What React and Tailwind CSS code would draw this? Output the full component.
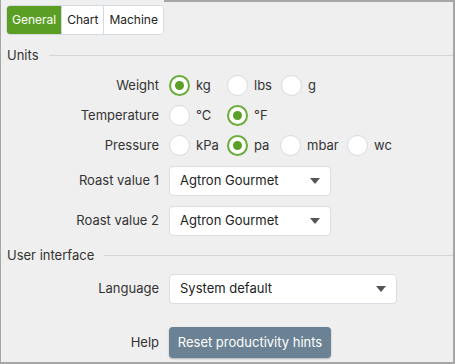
import { useState } from 'react';

const font = { fontFamily: 'Inter, "Noto Sans", sans-serif' };

function Radio({ checked, label, width, onClick }) {
  return (
    <button type="button" onClick={onClick} className="flex items-center gap-[6px] text-left" style={{ width }}>
      <span
        className={
          checked
            ? 'flex h-[21px] w-[21px] shrink-0 items-center justify-center rounded-full border-2 border-[#6aac3a] bg-white'
            : 'h-[21px] w-[21px] shrink-0 rounded-full border border-[#d3dbe0] bg-white'
        }
      >
        {checked && <span className="h-[9px] w-[9px] rounded-full bg-[#5a9f26]" />}
      </span>
      <span className="text-[13px] text-[#333]">{label}</span>
    </button>
  );
}

function Select({ value, width }) {
  return (
    <div
      className="flex h-[30px] items-center justify-between rounded-[4px] border border-[#d8dee3] bg-white pl-[10px] pr-[10px] text-[13px] text-[#222]"
      style={{ width }}
    >
      <span>{value}</span>
      <svg width="10" height="6" viewBox="0 0 10 6">
        <path d="M0 0h10L5 6z" fill="#555" />
      </svg>
    </div>
  );
}

function Row({ label, children, className = '' }) {
  return (
    <div className={'flex items-center ' + className}>
      <div className="w-[158px] text-right text-[13px] text-[#333]">{label}</div>
      <div className="ml-[10px] flex items-center">{children}</div>
    </div>
  );
}

function Section({ title }) {
  return (
    <div className="flex items-center gap-[10px] pl-[6px]">
      <span className="text-[13px] text-[#333]">{title}</span>
      <div className="h-px flex-1 bg-[#d4d4d4]" />
    </div>
  );
}

export default function App() {
  const [tab, setTab] = useState('General');
  const [weight, setWeight] = useState('kg');
  const [temp, setTemp] = useState('°F');
  const [pressure, setPressure] = useState('pa');

  const tabs = ['General', 'Chart', 'Machine'];

  return (
    <div style={font} className="h-[364px] w-[455px] overflow-hidden border-b-2 border-l border-r-2 border-[#a6a6a6] bg-[#efefef]">
      <div className="flex">
        <div className="flex pl-[5px] pt-[5px]">
          <div className="flex h-[30px] overflow-hidden rounded-[4px] border border-[#d2dadf] bg-white">
            {tabs.map((t, i) => (
              <button
                key={t}
                type="button"
                onClick={() => setTab(t)}
                className={
                  (tab === t ? 'bg-[#5a9f23] text-white ' : 'bg-white text-[#222] ') +
                  (i > 0 ? 'border-l border-[#d2dadf] ' : '') +
                  'px-[5px] text-[12px]'
                }
              >
                {t}
              </button>
            ))}
          </div>
        </div>
        <div className="h-[2px] flex-1 bg-[#a6a6a6]" />
      </div>

      <div className="mt-[11px]">
        <Section title="Units" />
      </div>

      <div className="mt-[5px] flex flex-col">
        <Row label="Weight" className="h-[30px]">
          <Radio checked={weight === 'kg'} label="kg" width={58} onClick={() => setWeight('kg')} />
          <Radio checked={weight === 'lbs'} label="lbs" width={54} onClick={() => setWeight('lbs')} />
          <Radio checked={weight === 'g'} label="g" width={40} onClick={() => setWeight('g')} />
        </Row>
        <Row label="Temperature" className="h-[30px]">
          <Radio checked={temp === '°C'} label="°C" width={58} onClick={() => setTemp('°C')} />
          <Radio checked={temp === '°F'} label="°F" width={40} onClick={() => setTemp('°F')} />
        </Row>
        <Row label="Pressure" className="h-[30px]">
          <Radio checked={pressure === 'kPa'} label="kPa" width={58} onClick={() => setPressure('kPa')} />
          <Radio checked={pressure === 'pa'} label="pa" width={53} onClick={() => setPressure('pa')} />
          <Radio checked={pressure === 'mbar'} label="mbar" width={67} onClick={() => setPressure('mbar')} />
          <Radio checked={pressure === 'wc'} label="wc" width={50} onClick={() => setPressure('wc')} />
        </Row>
      </div>

      <div className="mt-[5px] flex flex-col gap-[10px]">
        <Row label="Roast value 1">
          <Select value="Agtron Gourmet" width={162} />
        </Row>
        <Row label="Roast value 2">
          <Select value="Agtron Gourmet" width={162} />
        </Row>
      </div>

      <div className="mt-[10px]">
        <Section title="User interface" />
      </div>

      <div className="mt-[9px]">
        <Row label="Language">
          <Select value="System default" width={228} />
        </Row>
      </div>

      <div className="mt-[23px]">
        <Row label="Help">
          <button
            type="button"
            className="h-[31px] w-[162px] rounded-[4px] bg-[#6b8294] text-[13px] text-white shadow-[0_1px_2px_rgba(0,0,0,0.25)]"
          >
            Reset productivity hints
          </button>
        </Row>
      </div>
    </div>
  );
}
